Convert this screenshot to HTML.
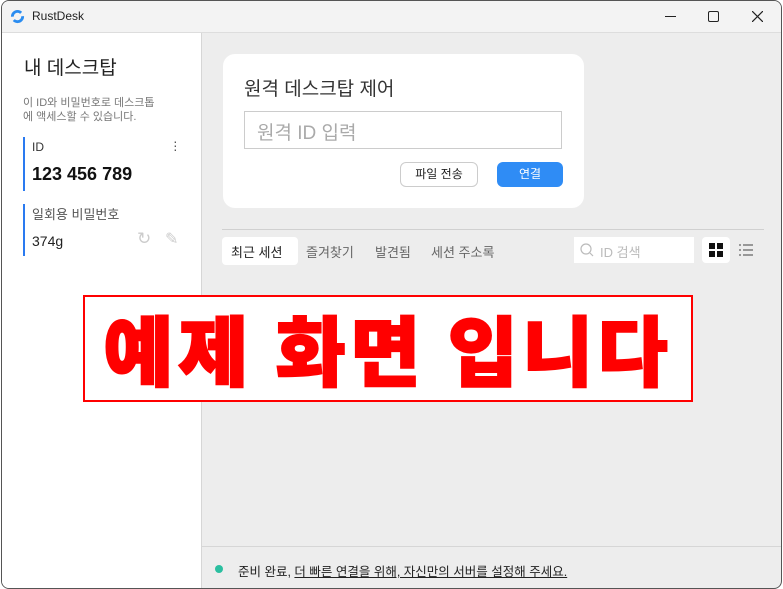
<!DOCTYPE html>
<html><head><meta charset="utf-8"><style>
*{margin:0;padding:0;box-sizing:border-box}
body{width:783px;height:589px;overflow:hidden;background:#fff;font-family:"Liberation Sans","Noto Sans CJK KR",sans-serif;position:relative}
.win{position:absolute;left:1px;top:0;width:781px;height:589px;border:1px solid #555;border-radius:8px 8px 8px 8px;overflow:hidden;background:#ededed}
.title{position:absolute;left:0;top:0;width:100%;height:32px;background:#f3f3f3;border-bottom:1px solid #ddd}
.abs{position:absolute}
.left{position:absolute;left:0;top:32px;width:200px;height:557px;background:#fff;border-right:1px solid #d6d6d6}
.card{position:absolute;left:221px;top:53px;width:361px;height:154px;background:#fff;border-radius:12px}
</style></head><body>
<div class="win">
<div class="title">
<svg class="abs" style="left:8px;top:8px" width="15" height="15" viewBox="0 0 16 16"><circle cx="8" cy="8" r="5.5" fill="none" stroke="#2a8cf0" stroke-width="3" stroke-dasharray="13 4"/></svg>
<div class="abs" style="left:30px;top:8px;font-size:12px;color:#222">RustDesk</div>
<div class="abs" style="left:663px;top:15px;width:11px;height:1px;background:#222"></div>
<div class="abs" style="left:706px;top:10px;width:11px;height:11px;border:1.3px solid #222;border-radius:2px"></div>
<svg class="abs" style="left:750px;top:10px" width="11" height="11"><path d="M0 0L11 11M11 0L0 11" stroke="#222" stroke-width="1.2"/></svg>
</div>
<div class="left">
<div class="abs" style="left:22px;top:20px;font-size:19px;color:#222">내 데스크탑</div>
<div class="abs" style="left:21px;top:63px;font-size:11px;color:#777;line-height:14px">이 ID와 비밀번호로 데스크톱<br>에 액세스할 수 있습니다.</div>
<div class="abs" style="left:21px;top:104px;width:2px;height:54px;background:#2a7af0"></div>
<div class="abs" style="left:30px;top:107px;font-size:12px;color:#333">ID</div>
<div class="abs" style="left:171px;top:106px;font-size:14px;color:#555;line-height:4px;width:4px;text-align:center">·<br>·<br>·</div>
<div class="abs" style="left:30px;top:131px;font-size:18px;font-weight:bold;color:#111">123 456 789</div>
<div class="abs" style="left:21px;top:171px;width:2px;height:52px;background:#2a7af0"></div>
<div class="abs" style="left:30px;top:171px;font-size:13px;color:#555">일회용 비밀번호</div>
<div class="abs" style="left:30px;top:200px;font-size:14px;color:#222">374g</div>
<div class="abs" style="left:135px;top:196px;font-size:17px;color:#ccc">↻</div>
<div class="abs" style="left:163px;top:196px;font-size:16px;color:#ccc">✎</div>
</div>
<div class="card">
<div class="abs" style="left:21px;top:20px;font-size:19px;color:#333">원격 데스크탑 제어</div>
<div class="abs" style="left:21px;top:57px;width:318px;height:38px;border:1px solid #ccc;font-size:19px;color:#aaa;padding:6px 12px">원격 ID 입력</div>
<div class="abs" style="left:177px;top:108px;width:78px;height:25px;border:1px solid #ccc;border-radius:6px;font-size:12px;color:#222;text-align:center;line-height:23px">파일 전송</div>
<div class="abs" style="left:274px;top:108px;width:66px;height:25px;background:#2f8cf5;border-radius:6px;font-size:12px;color:#fff;text-align:center;line-height:25px">연결</div>
</div>
<div class="abs" style="left:220px;top:228px;width:542px;height:1px;background:#d0d0d0"></div>
<div class="abs" style="left:220px;top:236px;width:76px;height:28px;background:#fff;border-radius:4px"></div>
<div class="abs" style="left:229px;top:241px;font-size:13px;color:#222">최근 세션</div>
<div class="abs" style="left:304px;top:241px;font-size:13px;color:#666">즐겨찾기</div>
<div class="abs" style="left:373px;top:241px;font-size:13px;color:#666">발견됨</div>
<div class="abs" style="left:429px;top:241px;font-size:13px;color:#666">세션 주소록</div>
<div class="abs" style="left:572px;top:236px;width:120px;height:26px;background:#fff"></div>
<svg class="abs" style="left:578px;top:242px" width="14" height="14"><circle cx="6" cy="6" r="5" fill="none" stroke="#bbb" stroke-width="1.2"/><path d="M10 10L13 13" stroke="#bbb" stroke-width="1.2"/></svg>
<div class="abs" style="left:598px;top:241px;font-size:13px;color:#bbb">ID 검색</div>
<div class="abs" style="left:700px;top:236px;width:28px;height:26px;background:#fff;border-radius:4px"></div>
<svg class="abs" style="left:707px;top:242px" width="14" height="14"><rect x="0" y="0" width="6" height="6" fill="#111"/><rect x="8" y="0" width="6" height="6" fill="#111"/><rect x="0" y="8" width="6" height="6" fill="#111"/><rect x="8" y="8" width="6" height="6" fill="#111"/></svg>
<svg class="abs" style="left:737px;top:243px" width="14" height="12"><path d="M0 1h2M4 1h10M0 6h2M4 6h10M0 11h2M4 11h10" stroke="#666" stroke-width="1.2"/></svg>
<div class="abs" style="left:200px;top:545px;width:581px;height:1px;background:#d6d6d6"></div>
<div class="abs" style="left:213px;top:564px;width:8px;height:8px;border-radius:50%;background:#2bbfa0"></div>
<div class="abs" style="left:236px;top:560px;font-size:12.5px;color:#222">준비 완료, <span style="text-decoration:underline">더 빠른 연결을 위해, 자신만의 서버를 설정해 주세요.</span></div>
</div>
<div class="abs" style="left:83px;top:295px;width:610px;height:107px;background:#fff;border:2px solid #f00"></div>
<div class="abs" style="left:83px;top:295px;width:610px;height:107px;text-align:center;font-size:76px;font-weight:900;color:#f00;line-height:104px;letter-spacing:5px;-webkit-text-stroke:2px #f00;font-family:'Noto Sans CJK KR',sans-serif">예제 화면 입니다</div>
</body></html>
